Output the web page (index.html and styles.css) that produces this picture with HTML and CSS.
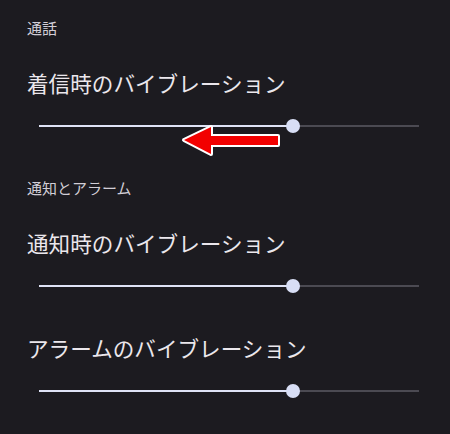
FILE: index.html
```html
<!DOCTYPE html>
<html lang="ja">
<head>
  <meta charset="UTF-8">
  <meta name="viewport" content="width=device-width, initial-scale=1.0">
  <link rel="stylesheet" href="styles.css">
  <title>バイブレーション</title>
</head>
<body>
  <main class="settings">
    <section class="category">
      <h2 class="category-title">通話</h2>
      <div class="pref">
        <div class="pref-title">着信時のバイブレーション</div>
        <div class="slider">
          <span class="track-active"></span>
          <span class="thumb"></span>
          <span class="track-rest"></span>
        </div>
      </div>
    </section>

    <section class="category">
      <h2 class="category-title">通知とアラーム</h2>
      <div class="pref">
        <div class="pref-title">通知時のバイブレーション</div>
        <div class="slider">
          <span class="track-active"></span>
          <span class="thumb"></span>
          <span class="track-rest"></span>
        </div>
      </div>
      <div class="pref">
        <div class="pref-title">アラームのバイブレーション</div>
        <div class="slider">
          <span class="track-active"></span>
          <span class="thumb"></span>
          <span class="track-rest"></span>
        </div>
      </div>
    </section>
  </main>

  <!-- annotation arrow -->
  <svg class="arrow" width="110" height="40" viewBox="178 120 110 40">
    <polygon points="184,140 211,127 211,136 278,136 278,145 211,145 211,154"
      fill="#f20000" stroke="#ffffff" stroke-width="4" stroke-linejoin="round" paint-order="stroke"/>
  </svg>
</body>
</html>
```

FILE: styles.css
```css
body {
  margin: 0;
  padding: 18px 0 0;
  background-color: #1c1b20;
  font-family: "Noto Sans CJK JP", "Noto Sans", sans-serif;
  color: #e6e1e6;
  height: 434px;
  box-sizing: border-box;
  overflow: hidden;
  position: relative;
}

.category + .category {
  margin-top: 40px;
}

.category-title {
  margin: 0 0 31px;
  padding: 0 27px;
  font-size: 15px;
  font-weight: normal;
  line-height: 20px;
  color: #d2ced6;
}

.pref + .pref {
  margin-top: 36px;
}

.pref-title {
  padding: 0 27px;
  font-size: 21.6px;
  line-height: 28px;
  color: #ebe7ec;
}

.slider {
  display: flex;
  align-items: center;
  height: 24px;
  margin: 17px 31px 0 39px;
}

.track-active {
  width: 66.8%;
  height: 2px;
  background-color: #dfe3f6;
}

.thumb {
  position: relative;
  width: 14px;
  height: 14px;
  margin: 0 -7px;
  border-radius: 50%;
  background-color: #d8def5;
  z-index: 1;
}

.track-rest {
  flex: 1;
  height: 2px;
  background-color: #4b4a52;
}

.arrow {
  position: absolute;
  left: 178px;
  top: 120px;
}
```
